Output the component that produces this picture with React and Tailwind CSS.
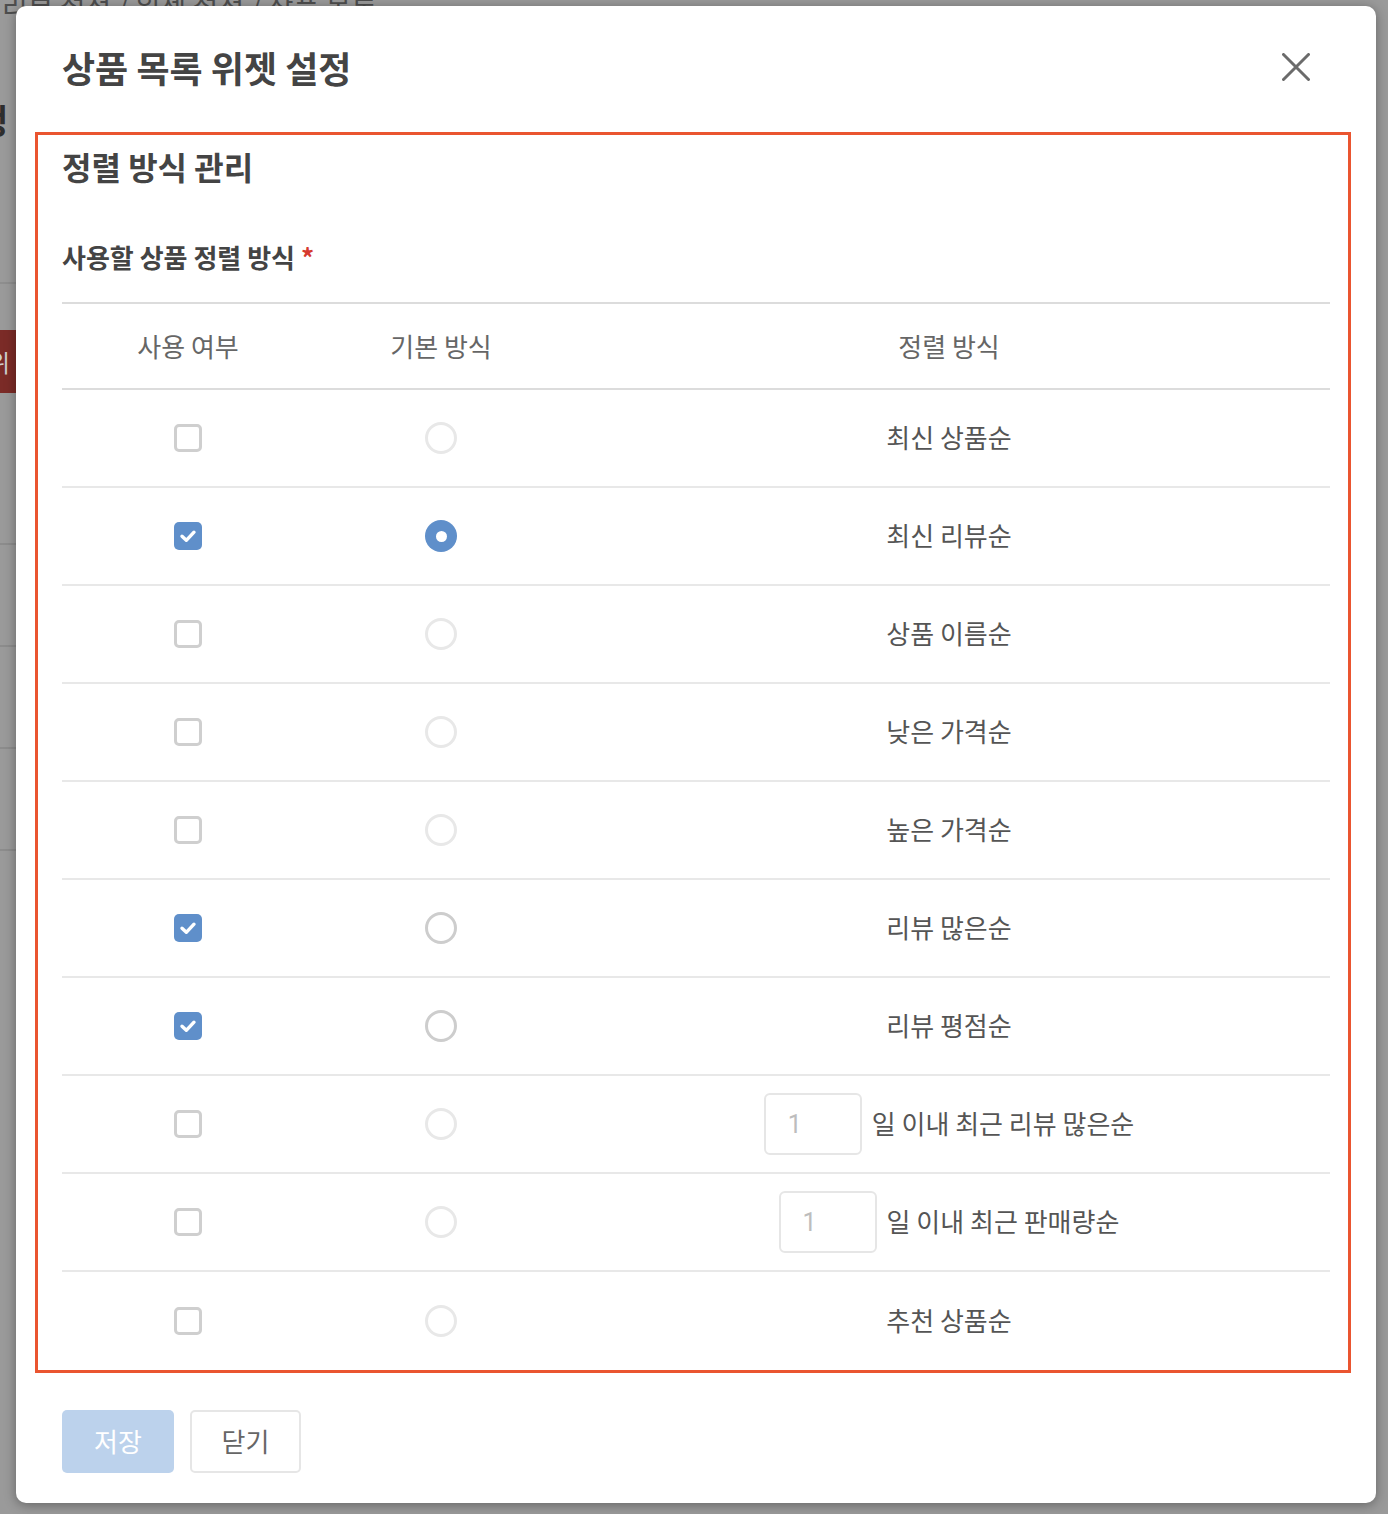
import { useState } from 'react';

const FONT = { fontFamily: '"Noto Sans CJK KR", "Noto Sans", sans-serif' };
const NUM_FONT = { fontFamily: 'Roboto, "Noto Sans", sans-serif' };

const initialRows = [
  { id: 'new', label: '최신 상품순', used: false },
  { id: 'review', label: '최신 리뷰순', used: true },
  { id: 'name', label: '상품 이름순', used: false },
  { id: 'low', label: '낮은 가격순', used: false },
  { id: 'high', label: '높은 가격순', used: false },
  { id: 'many', label: '리뷰 많은순', used: true },
  { id: 'score', label: '리뷰 평점순', used: true },
  { id: 'recentReview', label: '일 이내 최근 리뷰 많은순', used: false, days: true },
  { id: 'recentSales', label: '일 이내 최근 판매량순', used: false, days: true },
  { id: 'recommend', label: '추천 상품순', used: false },
];

const Checkbox = ({ checked, onChange }) => (
  <button
    type="button"
    onClick={onChange}
    className={`w-[28px] h-[28px] rounded-[5px] flex items-center justify-center ${checked ? 'bg-[#5f8fca]' : 'border-[3px] border-[#cfcfcf] bg-white'}`}
  >
    {checked && (
      <svg width="28" height="28" viewBox="0 0 28 28" fill="none">
        <path d="M8 14.2l4.3 4.1 7.7-8.1" stroke="white" strokeWidth="3.4" strokeLinecap="round" strokeLinejoin="round" />
      </svg>
    )}
  </button>
);

const Radio = ({ selected, disabled, onChange }) => {
  if (selected) {
    return (
      <button type="button" className="w-[32px] h-[32px] rounded-full bg-[#5f8fca] flex items-center justify-center">
        <span className="w-[11px] h-[11px] rounded-full bg-white" />
      </button>
    );
  }
  return (
    <button
      type="button"
      disabled={disabled}
      onClick={onChange}
      className={`w-[32px] h-[32px] rounded-full border-[3px] bg-white ${disabled ? 'border-[#e8e8e8]' : 'border-[#cdcdcd]'}`}
    />
  );
};

const SortRow = ({ row, isDefault, last, onToggle, onDefault }) => (
  <div className={`grid grid-cols-[252px_254px_1fr] h-[98px] items-center ${last ? '' : 'border-b-2 border-[#e8e8e8]'}`}>
    <div className="flex justify-center">
      <Checkbox checked={row.used} onChange={onToggle} />
    </div>
    <div className="flex justify-center">
      <Radio selected={isDefault} disabled={!row.used} onChange={onDefault} />
    </div>
    <div className="flex justify-center items-center gap-[10px] text-[26px] text-[#555]">
      {row.days && (
        <input
          placeholder="1"
          className="w-[98px] h-[62px] border-2 border-[#e6e6e6] rounded-[6px] pl-[22px] text-[25px] text-[#555] placeholder-[#bdbdbd] outline-none"
          style={NUM_FONT}
        />
      )}
      <span className="mb-[4px]">{row.label}</span>
    </div>
  </div>
);

export default function App() {
  const [rows, setRows] = useState(initialRows);
  const [defaultId, setDefaultId] = useState('review');

  const toggle = (id) => setRows(rows.map((r) => (r.id === id ? { ...r, used: !r.used } : r)));

  return (
    <div className="relative h-[1514px] bg-[#9a9a9a] overflow-hidden" style={FONT}>
      {/* page behind the dim layer */}
      <div className="-mt-[14px] pl-[2px] text-[28px] leading-[40px] text-[#4e4e4e] whitespace-nowrap">
        리뷰 설정 / 위젯 설정 / 상품 목록
      </div>
      <div className="-ml-[23px] mt-[69px] text-[34px] leading-[50px] font-bold text-[#2e2e2e]">정</div>
      <div className="mt-[137px] h-[2px] w-[16px] bg-[#8e8e8e]" />
      <div className="mt-[46px] h-[63px] w-[30px] bg-[#7b2b27] flex items-center -ml-[12px] text-[24px] text-[#cfcfcf]">위</div>
      <div className="mt-[150px] h-[2px] w-[16px] bg-[#8c8c8c]" />
      <div className="mt-[100px] h-[2px] w-[16px] bg-[#8c8c8c]" />
      <div className="mt-[100px] h-[2px] w-[16px] bg-[#8c8c8c]" />
      <div className="mt-[100px] h-[2px] w-[16px] bg-[#8c8c8c]" />

      {/* modal */}
      <div className="absolute left-[16px] top-[6px] w-[1360px] h-[1497px] bg-white rounded-[10px] shadow-[0_2px_12px_rgba(0,0,0,0.35)] px-[46px] pt-[34px] pb-[30px] flex flex-col">
        <div className="flex items-center justify-between h-[54px]">
          <h2 className="text-[36px] leading-[54px] font-bold text-[#444]">상품 목록 위젯 설정</h2>
          <button type="button" className="mr-[20px] w-[28px] h-[28px]">
            <svg width="28" height="28" viewBox="0 0 28 28" fill="none">
              <path d="M1.5 1.5l25 25M26.5 1.5l-25 25" stroke="#6b6b6b" strokeWidth="3" strokeLinecap="round" />
            </svg>
          </button>
        </div>

        <div className="mt-[38px] -ml-[27px] -mr-[21px] pl-[24px] pr-[18px] pt-[7px] border-[3px] border-[#ea5530]">
          <h3 className="text-[32px] leading-[48px] font-bold text-[#444]">정렬 방식 관리</h3>
          <div className="mt-[47px] text-[26px] leading-[39px] font-bold text-[#444]">
            사용할 상품 정렬 방식 <span className="text-[#d63a2f]">*</span>
          </div>
          <div className="mt-[26px] border-t-2 border-[#dcdcdc]">
            <div className="grid grid-cols-[252px_254px_1fr] h-[86px] items-center border-b-2 border-[#dcdcdc] text-[26px] text-[#666]">
              <div className="text-center mb-[2px]">사용 여부</div>
              <div className="text-center mb-[2px]">기본 방식</div>
              <div className="text-center mb-[2px]">정렬 방식</div>
            </div>
            {rows.map((row, i) => (
              <SortRow
                key={row.id}
                row={row}
                isDefault={defaultId === row.id}
                last={i === rows.length - 1}
                onToggle={() => toggle(row.id)}
                onDefault={() => setDefaultId(row.id)}
              />
            ))}
          </div>
        </div>

        <div className="mt-[37px] flex gap-[16px]">
          <button type="button" className="w-[112px] h-[63px] rounded-[5px] bg-[#bcd2ec] text-white text-[26px]">
            <span className="block mb-[3px]">저장</span>
          </button>
          <button type="button" className="w-[111px] h-[63px] rounded-[5px] border-2 border-[#e6e6e6] bg-white text-[#666] text-[26px]">
            <span className="block mb-[3px]">닫기</span>
          </button>
        </div>
      </div>
    </div>
  );
}
